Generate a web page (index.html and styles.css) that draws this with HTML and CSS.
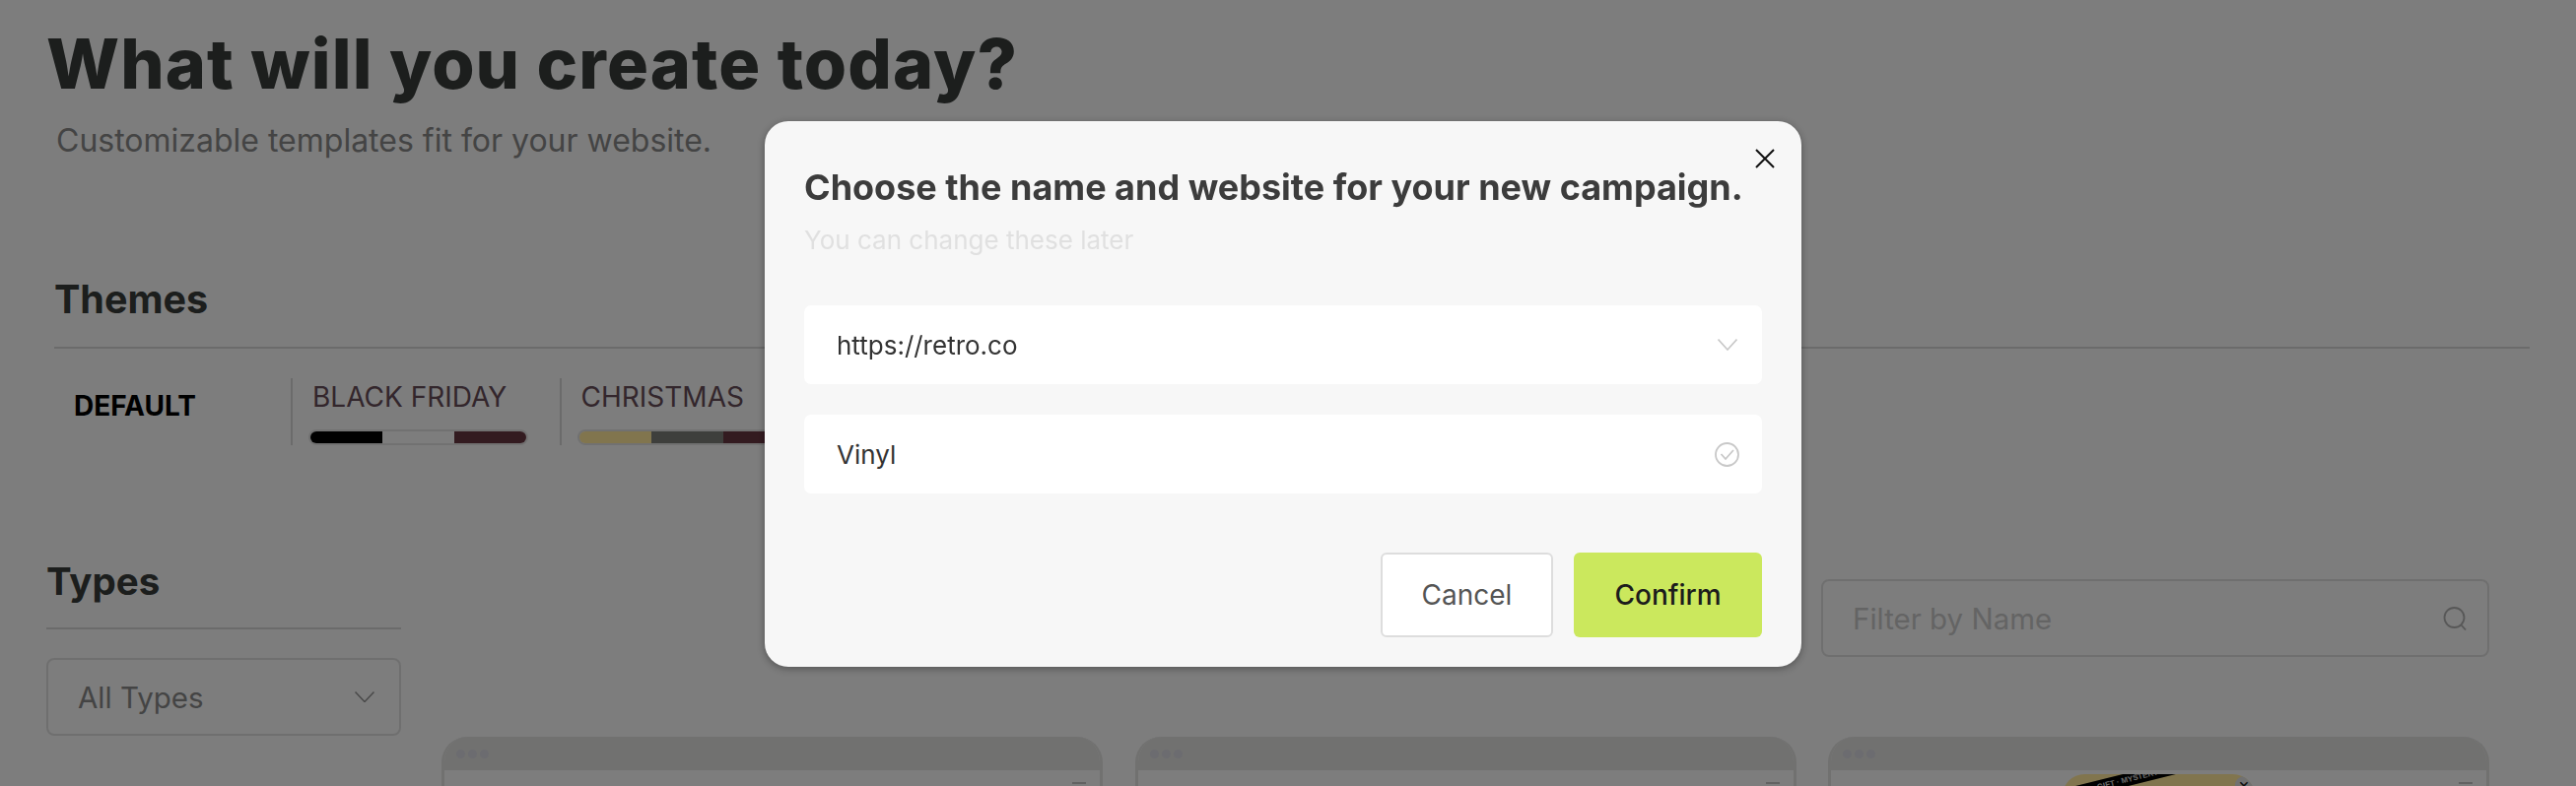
FILE: index.html
```html
<!DOCTYPE html>
<html lang="en">
<head>
<meta charset="utf-8">
<title>Templates</title>
<link rel="stylesheet" href="styles.css">
</head>
<body>
<main class="page">
  <header class="hero">
    <h1 class="hero-title">What will you create today?</h1>
    <p class="hero-sub">Customizable templates fit for your website.</p>
  </header>

  <section class="themes">
    <h2 class="section-title themes-title">Themes</h2>
    <div class="theme-row">
      <div class="theme-default">DEFAULT</div>
      <div class="theme">
        <span class="theme-name">BLACK FRIDAY</span>
        <span class="swatch"><i class="c-black"></i><i class="c-white"></i><i class="c-plum"></i></span>
      </div>
      <div class="theme">
        <span class="theme-name">CHRISTMAS</span>
        <span class="swatch"><i class="c-gold"></i><i class="c-dark"></i><i class="c-plum"></i></span>
      </div>
      <div class="theme theme-hidden">
        <span class="theme-name">&nbsp;</span>
        <span class="swatch"><i class="c-gold"></i><i class="c-dark"></i><i class="c-plum"></i></span>
      </div>
      <div class="theme theme-hidden">
        <span class="theme-name">&nbsp;</span>
        <span class="swatch"><i class="c-gold"></i><i class="c-dark"></i><i class="c-plum"></i></span>
      </div>
      <div class="theme theme-hidden">
        <span class="theme-name">&nbsp;</span>
        <span class="swatch"><i class="c-dark"></i><i class="c-dark"></i><i class="c-dark"></i></span>
      </div>
    </div>
  </section>

  <div class="browse">
    <aside class="sidebar">
      <h2 class="section-title types-title">Types</h2>
      <div class="sidebar-rule"></div>
      <div class="select">
        <span>All Types</span>
        <svg class="select-chevron" viewBox="0 0 20 11" fill="none"><path d="M.5.5 10 10.5 19.5.5" stroke="#8c8c8c" stroke-width="1.5"/></svg>
      </div>
    </aside>
    <div class="content">
      <div class="filter">
        <span>Filter by Name</span>
        <svg class="filter-icon" viewBox="0 0 24 24" fill="none"><circle cx="11.5" cy="11" r="10" stroke="#a8a8a8" stroke-width="1.8"/><path d="M18.5 18.5 23 23.5" stroke="#a8a8a8" stroke-width="1.8"/></svg>
      </div>
      <div class="cards">
        <article class="card">
          <div class="card-bar"><b></b><b></b><b></b></div>
          <div class="card-body"><span class="card-dash"></span></div>
        </article>
        <article class="card">
          <div class="card-bar"><b></b><b></b><b></b></div>
          <div class="card-body"><span class="card-dash"></span></div>
        </article>
        <article class="card">
          <div class="card-bar"><b></b><b></b><b></b></div>
          <div class="card-body">
            <div class="promo">
              <div class="ribbon">GIFT · MYSTERY</div>
              <span class="promo-close">×</span>
            </div>
            <span class="card-dash"></span>
          </div>
        </article>
      </div>
    </div>
  </div>
</main>

<div class="overlay"></div>

<div class="modal" role="dialog">
  <button class="modal-close" aria-label="Close">
    <svg viewBox="0 0 20 20" fill="none"><path d="M1 1 19 19M19 1 1 19" stroke="#111" stroke-width="2"/></svg>
  </button>
  <h2 class="modal-title">Choose the name and website for your new campaign.</h2>
  <p class="modal-sub">You can change these later</p>
  <div class="field">
    <span>https://retro.co</span>
    <svg class="field-chevron" viewBox="0 0 20 12" fill="none"><path d="M.5.5 10 11 19.5.5" stroke="#c8c8c8" stroke-width="1.6"/></svg>
  </div>
  <div class="field">
    <span>Vinyl</span>
    <svg class="field-check" viewBox="0 0 25 25" fill="none"><circle cx="12.5" cy="12.5" r="11.5" stroke="#c8c8c8" stroke-width="1.8"/><path d="M6.5 12 11 17 19 8" stroke="#c8c8c8" stroke-width="1.8"/></svg>
  </div>
  <div class="modal-actions">
    <button class="btn btn-cancel">Cancel</button>
    <button class="btn btn-confirm">Confirm</button>
  </div>
</div>
</body>
</html>
```
FILE: styles.css
```css
* { box-sizing: border-box; }
html, body { margin: 0; height: 798px; overflow: hidden; }
body { background: #f0f0f0; font-family: Inter, "Liberation Sans", sans-serif; }

.page { padding: 0 0 0 47px; height: 798px; overflow: hidden; }

.hero-title { margin: 0; padding-top: 22px; font-size: 70px; line-height: 85px; font-weight: 800; color: #363a38; letter-spacing: 1.1px; }
.hero-sub { margin: 0; padding: 14px 0 0 10px; font-size: 32px; line-height: 44px; font-weight: 400; color: #838383; }

.section-title { margin: 0; font-size: 39.5px; line-height: 46px; font-weight: 700; color: #363a38; }
.types-title { font-size: 38.5px; }

.themes { margin: 0 47px 0 8px; padding-top: 116px; }
.themes-title { padding-bottom: 25px; border-bottom: 2px solid #cecece; }
.theme-row { display: flex; margin-top: 30px; }
.theme-default { width: 240px; padding: 11px 0 0 20px; font-size: 28px; line-height: 34px; font-weight: 700; color: #000; }
.theme { width: 272.5px; height: 68px; padding: 0 0 0 18px; border-left: 2px solid #cecece; display: flex; flex-direction: column; }
.theme-hidden { width: 270.5px; }
.theme-name { padding-left: 2px; font-size: 28px; line-height: 38px; color: #634a55; }
.swatch { display: flex; width: 219px; height: 12px; margin-top: 16px; border-radius: 6px; overflow: hidden; box-shadow: 0 0 0 2px #d8d8d8; }
.swatch i { flex: 1; display: block; }
.c-black { background: #000; }
.c-white { background: #f0f0f0; }
.c-plum { background: #63343f; }
.c-gold { background: #f8e196; }
.c-dark { background: #777974; }

.browse { display: flex; margin-top: 115px; }
.sidebar { width: 360px; flex: none; }
.sidebar-rule { height: 2px; margin-top: 24px; background: #cecece; }
.select { display: flex; align-items: center; justify-content: space-between; height: 79px; margin-top: 29px; padding: 0 25px 0 30px; border: 2px solid #d5d5d5; border-radius: 8px; font-size: 29.5px; color: #838383; }
.select-chevron { width: 20px; height: 11px; }

.content { flex: 1; margin-left: 41px; min-width: 0; padding-right: 88px; }
.filter { display: flex; align-items: center; justify-content: space-between; width: 678px; height: 79px; margin: 21px 0 0 1400px; padding: 0 21px 0 30px; border: 2px solid #d5d5d5; border-radius: 8px; font-size: 29.5px; color: #c0c0c0; }
.filter-icon { width: 24px; height: 24px; }

.cards { display: flex; gap: 32.5px; margin-top: 81px; }
.card { width: 671px; flex: none; height: 200px; border: 3px solid #d8d8d6; border-top: 0; border-radius: 26px 26px 0 0; overflow: hidden; }
.card-bar { display: flex; gap: 3px; align-items: center; height: 34px; padding-left: 12px; background: #d8d8d6; }
.card-bar b { width: 9px; height: 9px; border-radius: 50%; background: #cfcfd7; }
.card-body { position: relative; height: 166px; background: #f0f0f0; }
.card-dash { position: absolute; top: 12px; right: 14px; width: 14px; height: 2px; background: #bdbdbd; }

.promo { position: absolute; top: 4px; left: 235px; width: 195px; height: 100px; border-radius: 22px 22px 0 0; background: #f8e196; overflow: hidden; }
.ribbon { position: absolute; top: -1px; left: -34px; width: 200px; height: 13px; background: #000; color: #cfcfcf; font: 700 8px/13px "Liberation Sans", sans-serif; text-align: center; transform: rotate(-14deg); }
.promo-close { position: absolute; top: 2px; right: 2px; width: 18px; height: 18px; border-radius: 50%; background: #d8d8d8; color: #222; font-size: 18px; line-height: 17px; text-align: center; }

.overlay { position: fixed; inset: 0; background: rgba(0, 0, 0, 0.48); }

.modal { position: fixed; left: 776px; top: 123px; width: 1052px; height: 554px; padding: 45px 40px 30px; background: #f7f7f7; border-radius: 24px; box-shadow: 0 2px 8px rgba(0, 0, 0, 0.35); display: flex; flex-direction: column; }
.modal-close { position: absolute; top: 28px; right: 27px; width: 20px; height: 20px; padding: 0; border: 0; background: none; }
.modal-close svg { display: block; width: 20px; height: 20px; }
.modal-title { margin: 0; font-size: 36px; line-height: 44px; font-weight: 700; color: #3c3c3c; white-space: nowrap; }
.modal-sub { margin: 12px 0 0; font-size: 26px; line-height: 40px; color: #e0e0e0; }

.field { display: flex; align-items: center; justify-content: space-between; height: 80px; padding: 0 25px 0 33px; background: #fff; border-radius: 7px; font-size: 26px; color: #333; }
.modal-sub + .field { margin-top: 46px; }
.field + .field { margin-top: 31px; }
.field-chevron { width: 20px; height: 12px; }
.field-check { width: 25px; height: 25px; margin-right: -2px; }

.modal-actions { display: flex; justify-content: flex-end; gap: 21px; margin-top: auto; }
.btn { height: 86px; border-radius: 6px; font-family: inherit; font-size: 28px; font-weight: 500; }
.btn-cancel { width: 175px; background: #fff; border: 2px solid #ddd; color: #555; font-weight: 400; }
.btn-confirm { width: 191px; background: #cbe85d; border: 0; color: #1c1c1c; }
```
